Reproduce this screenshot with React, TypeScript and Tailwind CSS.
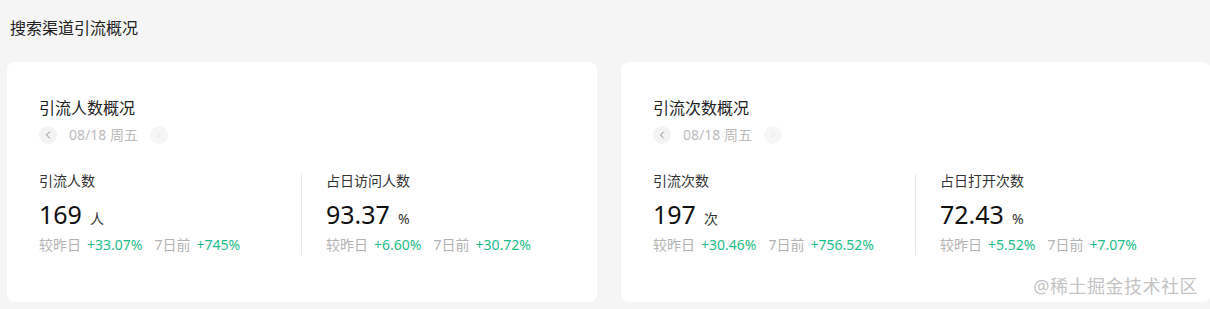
import { ChevronLeft, ChevronRight } from "lucide-react";

type Metric = {
  label: string;
  value: string;
  unit: string;
  day: string;
  week: string;
};

type Card = {
  title: string;
  metrics: Metric[];
};

const CARDS: Card[] = [
  {
    title: "引流人数概况",
    metrics: [
      { label: "引流人数", value: "169", unit: "人", day: "+33.07%", week: "+745%" },
      { label: "占日访问人数", value: "93.37", unit: "%", day: "+6.60%", week: "+30.72%" },
    ],
  },
  {
    title: "引流次数概况",
    metrics: [
      { label: "引流次数", value: "197", unit: "次", day: "+30.46%", week: "+756.52%" },
      { label: "占日打开次数", value: "72.43", unit: "%", day: "+5.52%", week: "+7.07%" },
    ],
  },
];

function MetricBlock({ metric, first }: { metric: Metric; first: boolean }) {
  return (
    <div className={first ? "w-[263px] border-r border-[#e8e8e8] h-[81px]" : "pl-6 h-[81px]"}>
      <div className="text-sm leading-5 text-[#333] -mt-[3px]">{metric.label}</div>
      <div className="flex items-baseline mt-[8px] h-[30px]">
        <span className="text-[25px] leading-[30px] text-[#111]">{metric.value}</span>
        <span className="text-sm text-[#333] ml-2">{metric.unit}</span>
      </div>
      <div className="flex items-center text-sm leading-5 mt-[6px] whitespace-nowrap">
        <span className="text-[#b3b3b3]">较昨日</span>
        <span className="text-[#1dbd8a] ml-[6px]">{metric.day}</span>
        <span className="text-[#b3b3b3] ml-3">7日前</span>
        <span className="text-[#1dbd8a] ml-[6px]">{metric.week}</span>
      </div>
    </div>
  );
}

function OverviewCard({ card }: { card: Card }) {
  return (
    <div className="w-[590px] h-[240px] shrink-0 bg-white rounded-lg pl-8 pt-[34px]">
      <div className="text-base leading-6 text-[#222]">{card.title}</div>
      <div className="flex items-center h-5 mt-[5px]">
        <span className="w-[18px] h-[18px] rounded-full bg-[#f3f3f3] flex items-center justify-center">
          <ChevronLeft className="w-3 h-3 text-[#666]" strokeWidth={1.5} />
        </span>
        <span className="text-sm text-[#bbb] ml-3">08/18 周五</span>
        <span className="w-[18px] h-[18px] rounded-full bg-[#f6f6f6] flex items-center justify-center ml-3">
          <ChevronRight className="w-3 h-3 text-[#ddd]" strokeWidth={1.5} />
        </span>
      </div>
      <div className="flex mt-[29px]">
        {card.metrics.map((m, i) => (
          <MetricBlock key={m.label} metric={m} first={i === 0} />
        ))}
      </div>
    </div>
  );
}

export default function App() {
  return (
    <div
      className="relative w-[1210px] h-[309px] overflow-hidden bg-[#f5f5f5]"
      style={{ fontFamily: '"Noto Sans", "Noto Sans CJK SC", sans-serif' }}
    >
      <div className="pl-[10px] pt-[16px] text-base leading-6 text-[#222]">搜索渠道引流概况</div>
      <div className="flex gap-6 pl-[7px] mt-[22px]">
        {CARDS.map((c) => (
          <OverviewCard key={c.title} card={c} />
        ))}
      </div>
      <div className="absolute right-[12px] top-[274px] text-[18px] leading-6 text-[#c4c4c4] tracking-[0.5px]">
        @稀土掘金技术社区
      </div>
    </div>
  );
}
